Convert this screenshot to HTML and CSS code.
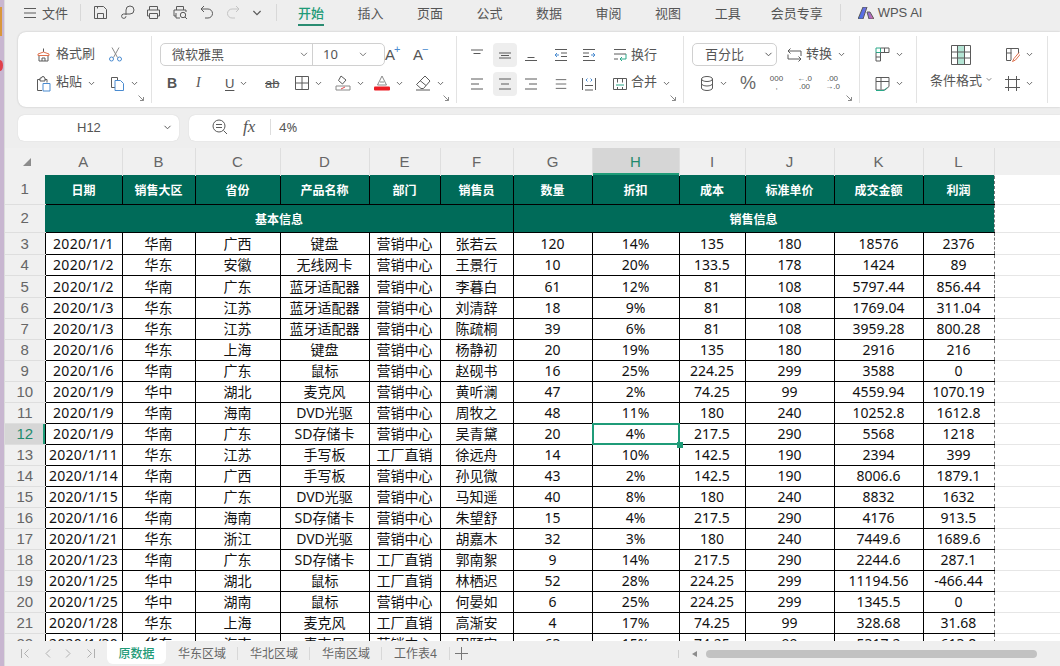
FILE: index.html
```html
<!DOCTYPE html>
<html lang="zh-CN">
<head>
  <meta charset="UTF-8">
  <title>原数据 - WPS 表格</title>
  <link rel="stylesheet" href="styles.css">
</head>
<body>
  <svg class="sprite">
    <symbol id="chev" viewBox="0 0 8 5"><path d="M1 .8l3 3 3-3"/></symbol>
    <symbol id="launch" viewBox="0 0 6 6"><path d="M.5.5l5 5M5.5 2v3.5H2"/></symbol>
    <symbol id="al-top" viewBox="0 0 16 16"><path d="M2 3h12M4.5 6.500h7"/></symbol>
    <symbol id="al-mid" viewBox="0 0 16 16"><path d="M2 6h12M4 8.500h8M2 11h12"/></symbol>
    <symbol id="al-bot" viewBox="0 0 16 16"><path d="M4.500 10.500h7M2 13.500h12"/></symbol>
    <symbol id="tx-left" viewBox="0 0 16 16"><path d="M2 3h12M2 8h8M2 13h12"/></symbol>
    <symbol id="tx-center" viewBox="0 0 16 16"><path d="M2 3h12M4 8h8M2 13h12"/></symbol>
    <symbol id="tx-right" viewBox="0 0 16 16"><path d="M2 3h12M6 8h8M2 13h12"/></symbol>
    <symbol id="tx-just" viewBox="0 0 16 16"><path d="M2 3h12M2 8h12M2 13h12"/></symbol>
  </svg>

  <div class="edge"><i class="edge-bar"></i><i class="edge-dot"></i></div>

  <div class="app">
    <!-- 顶部菜单 -->
    <header class="topbar">
      <svg class="menu-ic" width="12" height="12" viewBox="0 0 12 12"><path d="M0 1.500h12M0 6h12M0 10.500h12"/></svg>
      <span class="file">文件</span>
      <i class="vsep first"></i>
      <div class="qat">
        <svg width="15" height="15" viewBox="0 0 15 15"><path d="M1.500 1.500h9l3 3v9h-12zM4.500 13.500v-5h6v5M4.500 1.500v2"/></svg>
        <svg width="15" height="15" viewBox="0 0 15 15"><path d="M6 10V5a4 4 0 1 1 4 4H3.500a2.200 2.200 0 1 0 2.500 2.200"/></svg>
        <svg width="15" height="15" viewBox="0 0 15 15"><path d="M3.500 5V1.500h8V5M3.500 11h-2V5h12v6h-2M3.500 8.500h8v5h-8z"/></svg>
        <svg width="15" height="15" viewBox="0 0 15 15"><path d="M3.500 5V1.500h7V5M3 11H1V5h12v2M3 8v5h4"/><circle cx="10" cy="10" r="2.700"/><path d="M12 12l2 2"/></svg>
        <svg width="15" height="15" viewBox="0 0 15 15"><path d="M5 1L2 4l3 3M2 4h7a4 4 0 0 1 0 9H6"/></svg>
        <svg class="off" width="15" height="15" viewBox="0 0 15 15"><path d="M10 1l3 3-3 3M13 4H6a4 4 0 0 0 0 9h3"/></svg>
        <svg class="chev-qat" width="10" height="6"><use href="#chev"/></svg>
      </div>
      <i class="vsep second"></i>
      <nav class="tabs">
        <a class="tab on">开始</a><a class="tab">插入</a><a class="tab">页面</a><a class="tab">公式</a><a class="tab">数据</a><a class="tab">审阅</a><a class="tab">视图</a><a class="tab">工具</a><a class="tab">会员专享</a>
      </nav>
      <i class="vsep third"></i>
      <svg class="ai-logo" width="16" height="12" viewBox="0 0 16 12">
        <defs><linearGradient id="aig" x1="0" x2="1" y1="0" y2="0"><stop offset="0" stop-color="#3b6fe8"/><stop offset=".6" stop-color="#7a6ee0"/><stop offset="1" stop-color="#ee6a9a"/></linearGradient></defs>
        <path d="M5 0h4L5 12H0zM9 5h3l4 7h-5z" fill="url(#aig)"/>
      </svg>
      <span class="ai-text">WPS AI</span>
    </header>

    <!-- 功能区 -->
    <section class="ribbon">
      <div class="group g1">
        <div class="row">
          <span class="item">
            <svg width="15" height="15" viewBox="0 0 15 15"><path d="M3 8.500v5.500h9V8.500M6 14v-3h3v3M7.500 5V1.500"/><path class="or" d="M2 8.500V7l5.500-2L13 7v1.500z"/></svg>
            <span class="lb">格式刷</span>
          </span>
          <svg class="blue" width="15" height="15" viewBox="0 0 15 15"><path class="gr" d="M4 .5l5.500 10M11 .5L5.500 10.500"/><circle class="bl" cx="3.500" cy="12" r="2"/><circle class="bl" cx="11.500" cy="12" r="2"/></svg>
        </div>
        <div class="row">
          <span class="item">
            <svg width="15" height="16" viewBox="0 0 15 16"><path d="M6 14.500H1.500v-11H4M9 3.500h2v3M4 5V2h1.500a1.500 1.500 0 0 1 3 0H9v3z"/><path class="bl" d="M7 7.500h7v7.500H7z"/></svg>
            <span class="lb">粘贴</span>
            <svg class="chev" width="7" height="5"><use href="#chev"/></svg>
          </span>
          <span class="item">
            <svg width="15" height="15" viewBox="0 0 15 15"><path d="M5 11.500H1.500v-10h6V4"/><path class="bl" d="M5 4.500h5.500l3 3v7H5z"/></svg>
            <svg class="chev gap" width="7" height="5"><use href="#chev"/></svg>
          </span>
        </div>
        <svg class="launcher" width="6" height="6"><use href="#launch"/></svg>
      </div>

      <div class="group g2">
        <div class="row">
          <div class="combo font-box">
            <span class="face">微软雅黑</span>
            <svg class="chev" width="8" height="5"><use href="#chev"/></svg>
            <i class="combo-sep"></i>
            <span class="fsize">10</span>
            <svg class="chev" width="8" height="5"><use href="#chev"/></svg>
          </div>
          <span class="font-step">A<b>+</b></span>
          <span class="font-step">A<b>−</b></span>
        </div>
        <div class="row">
          <span class="t-b">B</span>
          <span class="t-i">I</span>
          <span class="item"><span class="t-u">U</span><svg class="chev gap" width="7" height="5"><use href="#chev"/></svg></span>
          <span class="t-s">ab</span>
          <span class="item">
            <svg width="14" height="14" viewBox="0 0 14 14"><path d="M.5.500h13v13H.5zM7 .5v13M.5 7h13"/></svg>
            <svg class="chev gap" width="7" height="5"><use href="#chev"/></svg>
          </span>
          <span class="item">
            <svg width="16" height="16" viewBox="0 0 16 16"><path d="M6 1l5 4-3.500 4-4-3.500z"/><path class="gr" d="M1 11h14v4H1z"/><path class="rd" d="M6 14l4-2"/></svg>
            <svg class="chev gap" width="7" height="5"><use href="#chev"/></svg>
          </span>
          <span class="item">
            <svg width="16" height="16" viewBox="0 0 16 16"><path class="gr" d="M8 1L3.500 10h9zM6 7h4"/><rect class="fill-red" x="0" y="11.500" width="16" height="4" rx="1"/></svg>
            <svg class="chev gap" width="7" height="5"><use href="#chev"/></svg>
          </span>
          <span class="item">
            <svg width="16" height="16" viewBox="0 0 16 16"><path d="M10 1l5 5-6.500 7.500H6L1.500 9.500zM5 5.500l6 5M1 15h14"/></svg>
            <svg class="chev gap" width="7" height="5"><use href="#chev"/></svg>
          </span>
        </div>
        <svg class="launcher" width="6" height="6"><use href="#launch"/></svg>
      </div>

      <div class="group g3">
        <div class="row">
          <span class="cell-ic"><svg width="16" height="16"><use href="#al-top"/></svg></span>
          <span class="cell-ic hot"><svg width="16" height="16"><use href="#al-mid"/></svg></span>
          <span class="cell-ic"><svg width="16" height="16"><use href="#al-bot"/></svg></span>
          <svg width="14" height="14" viewBox="0 0 14 14"><path d="M1 1.500h12M7 5h6M7 8.500h6M1 12.500h12"/><path class="bl" d="M5 7H1M3 5L1 7l2 2"/></svg>
          <svg width="14" height="14" viewBox="0 0 14 14"><path d="M1 1.500h12M1 5h6M1 8.500h6M1 12.500h12"/><path class="bl" d="M9 7h4M11 5l2 2-2 2"/></svg>
          <span class="item">
            <svg width="14" height="14" viewBox="0 0 14 14"><path d="M1 1.500h12M1 6h12M1 11h4"/><path class="tl" d="M13 6v5H7M9 9l-2 2 2 2"/></svg>
            <span class="lb">换行</span>
          </span>
        </div>
        <div class="row">
          <span class="cell-ic"><svg width="16" height="16"><use href="#tx-left"/></svg></span>
          <span class="cell-ic hot"><svg width="16" height="16"><use href="#tx-center"/></svg></span>
          <span class="cell-ic"><svg width="16" height="16"><use href="#tx-right"/></svg></span>
          <svg width="14" height="14"><use href="#tx-just"/></svg>
          <svg width="14" height="14" viewBox="0 0 14 14"><path d="M.5 1v12M13.500 1v12M3 13h8M3 8.500h8"/><path class="bl" d="M5.500 1.500L4 3l1.500 1.500M8.500 1.500L10 3 8.500 4.500"/></svg>
          <span class="item">
            <svg width="14" height="14" viewBox="0 0 14 14"><path d="M.5 1.500h13v11H.5zM4.500 1.500v4M9.500 1.500v4M4.500 10v2.500M9.500 10v2.500"/><path class="tl" d="M3 8h8"/></svg>
            <span class="lb">合并</span>
            <svg class="chev" width="7" height="5"><use href="#chev"/></svg>
          </span>
        </div>
        <svg class="launcher" width="6" height="6"><use href="#launch"/></svg>
      </div>

      <div class="group g4">
        <div class="row">
          <div class="combo num-box">
            <span class="face">百分比</span>
            <svg class="chev" width="9" height="5"><use href="#chev"/></svg>
          </div>
          <span class="item">
            <svg width="15" height="14" viewBox="0 0 15 14"><path d="M3.500 .5L1 3l2.500 2.500M1 3h13v5M1 6.500V11h13M11.500 8.500L14 11l-2.500 2.500"/></svg>
            <span class="lb">转换</span>
            <svg class="chev" width="7" height="5"><use href="#chev"/></svg>
          </span>
        </div>
        <div class="row">
          <span class="item">
            <svg width="14" height="15" viewBox="0 0 14 15"><ellipse cx="7" cy="3" rx="5.500" ry="2.500"/><path d="M1.500 3v9c0 1.400 2.500 2.500 5.500 2.500s5.500-1.100 5.500-2.500V3M1.500 7.500c0 1.400 2.500 2.500 5.500 2.500s5.500-1.100 5.500-2.500"/></svg>
            <svg class="chev gap" width="7" height="5"><use href="#chev"/></svg>
          </span>
          <span class="t-pct">%</span>
          <span class="t-thou">000<br>,</span>
          <span class="t-dec">←.0<br>.00</span>
          <span class="t-dec">.00<br>→.0</span>
        </div>
        <svg class="launcher" width="6" height="6"><use href="#launch"/></svg>
      </div>

      <div class="group g5">
        <div class="row">
          <span class="item">
            <svg width="15" height="15" viewBox="0 0 15 15"><path class="tl" d="M1 1h4.500v4.500H1z"/><path d="M5.500 5.500V14H1V5.500M5.500 1H14v4.500H5.500M9.500 1v4.500M1 10h4.500"/></svg>
            <svg class="chev gap" width="7" height="5"><use href="#chev"/></svg>
          </span>
        </div>
        <div class="row">
          <span class="item">
            <svg width="15" height="15" viewBox="0 0 15 15"><path d="M1 1.500h13v9l-4 3.500H1zM1 5.500h13M6 1.500v12"/><path class="tl" d="M1 14.500h8l3-3"/></svg>
            <svg class="chev gap" width="7" height="5"><use href="#chev"/></svg>
          </span>
        </div>
      </div>

      <div class="group g6">
        <div class="big">
          <svg width="20" height="20" viewBox="0 0 20 20">
            <rect class="fill-mint" x="6" y="0" width="8" height="20"/>
            <path d="M.5.500h19v19H.5zM.5 7h19M.5 13h19M6.500.5v19M13.500.5v19"/>
          </svg>
          <span class="big-lb">条件格式<svg class="chev" width="6" height="5"><use href="#chev"/></svg></span>
        </div>
        <div class="side">
          <div class="row">
            <span class="item">
              <svg width="15" height="15" viewBox="0 0 15 15"><path d="M6 13.500H1.500v-12h12v5M1.500 6h5M6 1.500V13"/><path class="or" d="M14 5.500l-5 6-1.500 3 3-1.500 5-6"/></svg>
              <svg class="chev gap" width="7" height="5"><use href="#chev"/></svg>
            </span>
          </div>
          <div class="row">
            <span class="item">
              <svg width="15" height="15" viewBox="0 0 15 15"><path d="M3.500 0v15M11.500 0v15M0 3.500h15M0 11.500h15"/></svg>
              <svg class="chev gap" width="7" height="5"><use href="#chev"/></svg>
            </span>
          </div>
        </div>
      </div>
    </section>

    <!-- 编辑栏 -->
    <section class="formula">
      <div class="namebox">
        <span>H12</span>
        <svg class="chev" width="9" height="5"><use href="#chev"/></svg>
      </div>
      <div class="fbox">
        <svg class="zoom-ic" width="16" height="16" viewBox="0 0 16 16"><circle cx="7" cy="7" r="6"/><path d="M4 5.500h6M4 8.500h6M11.500 11.500l3.500 3.500"/></svg>
        <span class="fx">fx</span>
        <i class="fsep"></i>
        <span class="fval">4%</span>
      </div>
    </section>

    <!-- 表格 -->
    <main class="sheet">
      <table class="grid">
        <colgroup>
          <col class="w-rh"><col class="w-a"><col class="w-b"><col class="w-c"><col class="w-d"><col class="w-e"><col class="w-f"><col class="w-g"><col class="w-h"><col class="w-i"><col class="w-j"><col class="w-k"><col class="w-l"><col class="w-m">
        </colgroup>
        <thead>
          <tr class="letters">
            <th class="corner"><svg width="8" height="8" viewBox="0 0 8 8"><path class="fill-gr" d="M8 0v8H0z"/></svg></th>
            <th>A</th><th>B</th><th>C</th><th>D</th><th>E</th><th>F</th><th>G</th><th class="cur">H</th><th>I</th><th>J</th><th>K</th><th>L</th><th class="rest"></th>
          </tr>
        </thead>
        <tbody>
          <tr class="title"><th>1</th><td>日期</td><td>销售大区</td><td>省份</td><td>产品名称</td><td>部门</td><td>销售员</td><td>数量</td><td>折扣</td><td>成本</td><td>标准单价</td><td>成交金额</td><td class="last">利润</td><td class="rest"></td></tr>
          <tr class="title two"><th>2</th><td colspan="6">基本信息</td><td colspan="6" class="last">销售信息</td><td class="rest"></td></tr>
          <tr class="tall"><th>3</th><td>2020/1/1</td><td>华南</td><td>广西</td><td>键盘</td><td>营销中心</td><td>张若云</td><td>120</td><td>14%</td><td>135</td><td>180</td><td>18576</td><td class="last">2376</td><td class="rest"></td></tr>
          <tr><th>4</th><td>2020/1/2</td><td>华东</td><td>安徽</td><td>无线网卡</td><td>营销中心</td><td>王景行</td><td>10</td><td>20%</td><td>133.5</td><td>178</td><td>1424</td><td class="last">89</td><td class="rest"></td></tr>
          <tr class="tall"><th>5</th><td>2020/1/2</td><td>华南</td><td>广东</td><td>蓝牙适配器</td><td>营销中心</td><td>李暮白</td><td>61</td><td>12%</td><td>81</td><td>108</td><td>5797.44</td><td class="last">856.44</td><td class="rest"></td></tr>
          <tr><th>6</th><td>2020/1/3</td><td>华东</td><td>江苏</td><td>蓝牙适配器</td><td>营销中心</td><td>刘清辞</td><td>18</td><td>9%</td><td>81</td><td>108</td><td>1769.04</td><td class="last">311.04</td><td class="rest"></td></tr>
          <tr><th>7</th><td>2020/1/3</td><td>华东</td><td>江苏</td><td>蓝牙适配器</td><td>营销中心</td><td>陈疏桐</td><td>39</td><td>6%</td><td>81</td><td>108</td><td>3959.28</td><td class="last">800.28</td><td class="rest"></td></tr>
          <tr><th>8</th><td>2020/1/6</td><td>华东</td><td>上海</td><td>键盘</td><td>营销中心</td><td>杨静初</td><td>20</td><td>19%</td><td>135</td><td>180</td><td>2916</td><td class="last">216</td><td class="rest"></td></tr>
          <tr><th>9</th><td>2020/1/6</td><td>华南</td><td>广东</td><td>鼠标</td><td>营销中心</td><td>赵砚书</td><td>16</td><td>25%</td><td>224.25</td><td>299</td><td>3588</td><td class="last">0</td><td class="rest"></td></tr>
          <tr><th>10</th><td>2020/1/9</td><td>华中</td><td>湖北</td><td>麦克风</td><td>营销中心</td><td>黄听澜</td><td>47</td><td>2%</td><td>74.25</td><td>99</td><td>4559.94</td><td class="last">1070.19</td><td class="rest"></td></tr>
          <tr><th>11</th><td>2020/1/9</td><td>华南</td><td>海南</td><td>DVD光驱</td><td>营销中心</td><td>周牧之</td><td>48</td><td>11%</td><td>180</td><td>240</td><td>10252.8</td><td class="last">1612.8</td><td class="rest"></td></tr>
          <tr><th class="cur">12</th><td>2020/1/9</td><td>华南</td><td>广东</td><td>SD存储卡</td><td>营销中心</td><td>吴青黛</td><td>20</td><td class="sel">4%</td><td>217.5</td><td>290</td><td>5568</td><td class="last">1218</td><td class="rest"></td></tr>
          <tr><th>13</th><td>2020/1/11</td><td>华东</td><td>江苏</td><td>手写板</td><td>工厂直销</td><td>徐远舟</td><td>14</td><td>10%</td><td>142.5</td><td>190</td><td>2394</td><td class="last">399</td><td class="rest"></td></tr>
          <tr><th>14</th><td>2020/1/14</td><td>华南</td><td>广西</td><td>手写板</td><td>营销中心</td><td>孙见微</td><td>43</td><td>2%</td><td>142.5</td><td>190</td><td>8006.6</td><td class="last">1879.1</td><td class="rest"></td></tr>
          <tr><th>15</th><td>2020/1/15</td><td>华南</td><td>广东</td><td>DVD光驱</td><td>营销中心</td><td>马知遥</td><td>40</td><td>8%</td><td>180</td><td>240</td><td>8832</td><td class="last">1632</td><td class="rest"></td></tr>
          <tr><th>16</th><td>2020/1/16</td><td>华南</td><td>海南</td><td>SD存储卡</td><td>营销中心</td><td>朱望舒</td><td>15</td><td>4%</td><td>217.5</td><td>290</td><td>4176</td><td class="last">913.5</td><td class="rest"></td></tr>
          <tr><th>17</th><td>2020/1/21</td><td>华东</td><td>浙江</td><td>DVD光驱</td><td>营销中心</td><td>胡嘉木</td><td>32</td><td>3%</td><td>180</td><td>240</td><td>7449.6</td><td class="last">1689.6</td><td class="rest"></td></tr>
          <tr><th>18</th><td>2020/1/23</td><td>华南</td><td>广东</td><td>SD存储卡</td><td>工厂直销</td><td>郭南絮</td><td>9</td><td>14%</td><td>217.5</td><td>290</td><td>2244.6</td><td class="last">287.1</td><td class="rest"></td></tr>
          <tr><th>19</th><td>2020/1/25</td><td>华中</td><td>湖北</td><td>鼠标</td><td>工厂直销</td><td>林栖迟</td><td>52</td><td>28%</td><td>224.25</td><td>299</td><td>11194.56</td><td class="last">-466.44</td><td class="rest"></td></tr>
          <tr><th>20</th><td>2020/1/25</td><td>华中</td><td>湖南</td><td>鼠标</td><td>营销中心</td><td>何晏如</td><td>6</td><td>25%</td><td>224.25</td><td>299</td><td>1345.5</td><td class="last">0</td><td class="rest"></td></tr>
          <tr><th>21</th><td>2020/1/28</td><td>华东</td><td>上海</td><td>麦克风</td><td>工厂直销</td><td>高渐安</td><td>4</td><td>17%</td><td>74.25</td><td>99</td><td>328.68</td><td class="last">31.68</td><td class="rest"></td></tr>
          <tr><th>22</th><td>2020/1/30</td><td>华东</td><td>海南</td><td>麦克风</td><td>营销中心</td><td>田颐安</td><td>63</td><td>15%</td><td>74.25</td><td>99</td><td>5317.2</td><td class="last">613.8</td><td class="rest"></td></tr>
        </tbody>
      </table>
    </main>

    <!-- 工作表标签 -->
    <footer class="sheetbar">
      <div class="nav">
        <svg width="9" height="9" viewBox="0 0 9 9"><path d="M.5 0v9M7.500.5l-4 4 4 4"/></svg>
        <svg width="7" height="9" viewBox="0 0 7 9"><path d="M6 .5l-4 4 4 4"/></svg>
        <svg width="7" height="9" viewBox="0 0 7 9"><path d="M1 .5l4 4-4 4"/></svg>
        <svg width="9" height="9" viewBox="0 0 9 9"><path d="M8.500 0v9M1.500.5l4 4-4 4"/></svg>
      </div>
      <a class="stab on">原数据</a><a class="stab">华东区域</a><a class="stab">华北区域</a><a class="stab">华南区域</a><a class="stab short">工作表4</a>
      <svg class="plus" width="13" height="13" viewBox="0 0 13 13"><path d="M6.500 0v13M0 6.500h13"/></svg>
      <i class="bar-sep"></i>
      <svg class="arrow-left" width="5" height="6" viewBox="0 0 5 6"><path class="fill-gr" d="M5 0v6L0 3z"/></svg>
      <div class="thumb"></div>
    </footer>
  </div>
</body>
</html>
```

FILE: styles.css
```css
html, body {
  margin: 0;
  height: 100%;
}
body {
  width: 1060px;
  height: 666px;
  display: flex;
  overflow: hidden;
  background: #eeeeee;
  color: #555;
  font-family: "Noto Sans", "Noto Sans CJK SC", sans-serif;
  font-size: 13px;
}
svg {
  fill: none;
  stroke: #5a5a5a;
  stroke-width: 1;
  flex: none;
  display: block;
}
.sprite { display: none; }
.bl { stroke: #4a8bd0; }
.gr { stroke: #8a8a8a; }
.rd { stroke: #e5484d; }
.tl { stroke: #2aa888; }
.or { stroke: #e0734f; }
.fill-red { fill: #ec1c24; stroke: none; }
.fill-mint { fill: #b4e4d4; stroke: none; }
.fill-gr { fill: #8c8c8c; stroke: none; }

/* 左侧露出的桌面 */
.edge {
  position: relative;
  width: 5px;
  flex: none;
  background: #c8b6d0;
  border-right: 1px solid #dcdcdc;
  box-sizing: border-box;
}
.edge-bar {
  position: absolute;
  top: 7px;
  left: 0;
  width: 2px;
  height: 29px;
  background: #d9973b;
}
.edge-dot {
  position: absolute;
  top: 60px;
  left: -3px;
  width: 6px;
  height: 11px;
  border-radius: 50%;
  background: #e0404a;
}

.app {
  flex: 1;
  min-width: 0;
  display: flex;
  flex-direction: column;
}

/* 顶部菜单 */
.topbar {
  height: 32px;
  flex: none;
  display: flex;
  align-items: center;
  padding: 0 0 7px 19px;
  box-sizing: border-box;
}
.file { margin-left: 6px; }
.vsep {
  width: 1px;
  height: 17px;
  background: #d8d8d8;
  flex: none;
}
.vsep.first { margin: 0 12px; }
.vsep.second { margin: 0 21px 0 14px; }
.vsep.third { margin: 0 17px; }
.qat {
  display: flex;
  align-items: center;
  gap: 11.5px;
}
.qat .off { stroke: #c4c4c4; }
.tabs {
  display: flex;
  gap: 33.5px;
}
.tab {
  position: relative;
  line-height: 24px;
  white-space: nowrap;
}
.tab:last-child { margin-left: -3.5px; }
.tab.on {
  color: #1f9b78;
  font-weight: 500;
}
.tab.on::after {
  content: "";
  position: absolute;
  left: 0;
  right: 0;
  bottom: -1px;
  height: 2px;
  background: #2a8c72;
}
.ai-text {
  margin-left: 4px;
  font-family: "Liberation Sans", sans-serif;
  font-size: 13px;
}

/* 功能区 */
.ribbon {
  height: 75px;
  flex: none;
  margin-left: 13px;
  padding-top: 4px;
  box-sizing: border-box;
  display: flex;
  background: #fff;
  border-radius: 8px 0 0 8px;
  box-shadow: 0 0 2px rgba(0, 0, 0, .22);
}
.group {
  position: relative;
  height: 67px;
  padding-top: 7px;
  box-sizing: border-box;
  border-right: 1px solid #e3e3e3;
  flex: none;
}
.row {
  display: grid;
  align-items: center;
  height: 23px;
}
.row + .row {
  margin-top: 5px;
  height: 24px;
}
.item {
  display: flex;
  align-items: center;
  white-space: nowrap;
}
.lb {
  margin: 0 0 4px 5px;
}
.row + .row .lb { margin-bottom: 6px; }
.chev {
  margin-left: 6px;
  stroke-width: 1;
}
.launcher {
  position: absolute;
  right: 7px;
  bottom: 2px;
  stroke: #8a8a8a;
}
.combo {
  display: flex;
  align-items: center;
  height: 23px;
  box-sizing: border-box;
  border: 1px solid #d0d0d0;
  border-radius: 5px;
}
.combo .chev { margin-left: 0; }
.face, .fsize { margin-bottom: 2px; }

.g1 { width: 134px; padding-left: 18px; }
.g1 .row { grid-template-columns: 72px auto; }
.g1 .row + .row { grid-template-columns: 74px auto; }
.g1 .chev.gap { margin-left: 6px; }

.g2 { width: 305px; padding-left: 8px; }
.g2 .row { grid-template-columns: 225px 28px auto; }
.g2 .row + .row {
  padding-left: 7px;
  grid-template-columns: 29px 29px 40px 30px 40px 39px 41px auto;
}
.font-box { padding-left: 11px; }
.font-box .face { width: 128px; }
.font-box > .chev { stroke: #777; }
.combo-sep {
  width: 1px;
  height: 21px;
  margin: 0 10px 0 4px;
  background: #d0d0d0;
}
.fsize { width: 36px; }
.font-step {
  font-family: "Liberation Sans", sans-serif;
  font-size: 15px;
  position: relative;
  width: 14px;
  line-height: 23px;
}
.font-step b {
  position: absolute;
  left: 9px;
  top: -5px;
  color: #4a8bd0;
  font-size: 11px;
  font-weight: 400;
}
.t-b, .t-i, .t-u, .t-s {
  font-family: "Liberation Sans", sans-serif;
  font-size: 13px;
}
.t-b { font-weight: 700; font-size: 14px; }
.t-i { font-style: italic; font-family: "Liberation Serif", serif; font-size: 14px; }
.t-u { text-decoration: underline; text-underline-offset: 2px; }
.t-s { text-decoration: line-through; }

.g3 { width: 227px; padding-left: 13px; }
.g3 .row { grid-template-columns: 23px 31px 30px 28px 31px auto; }
.g3 .lb { margin-left: 4px; }
.cell-ic {
  width: 24px;
  height: 24px;
  margin-left: -5px;
  display: flex;
  align-items: center;
  justify-content: center;
  border-radius: 4px;
}
.cell-ic.hot {
  margin-left: 0;
  background: #eeeeee;
}

.g4 { width: 176px; padding-left: 8px; }
.g4 .row { grid-template-columns: 95px auto; }
.g4 .lb { margin-left: 4px; }
.g4 .row + .row {
  padding-left: 8px;
  grid-template-columns: 40px 29px 28px 28px auto;
}
.num-box {
  width: 85px;
  padding-left: 12px;
}
.num-box .face { width: 59px; }
.t-pct {
  font-family: "Liberation Sans", sans-serif;
  font-size: 18px;
  color: #666;
}
.t-thou, .t-dec {
  font-family: "Liberation Sans", sans-serif;
  font-size: 8px;
  line-height: 8px;
  text-align: center;
  width: 15px;
}

.g5 { width: 57px; padding-left: 15px; }
.g5 .row { grid-template-columns: auto; }

.g6 {
  width: 131px;
  display: flex;
  padding-left: 13px;
}
.big {
  width: 75px;
  display: flex;
  flex-direction: column;
  align-items: flex-start;
}
.big > svg {
  margin: 2px 0 0 21px;
}
.big-lb {
  display: flex;
  align-items: center;
  margin-top: 5px;
  white-space: nowrap;
}
.big-lb .chev { margin-left: 4px; }
.side .row { grid-template-columns: auto; }

/* 编辑栏 */
.formula {
  height: 26px;
  flex: none;
  margin: 8px 0 7px 13px;
  display: flex;
  gap: 10px;
}
.namebox {
  width: 161px;
  flex: none;
  display: flex;
  align-items: center;
  padding: 0 7px 2px 59px;
  box-sizing: border-box;
  justify-content: space-between;
  background: #fff;
  border-radius: 6px;
  font-family: "Liberation Sans", sans-serif;
  box-shadow: 0 0 1px rgba(0, 0, 0, .2);
}
.fbox {
  flex: 1;
  display: flex;
  align-items: center;
  padding: 0 0 2px 23px;
  background: #fff;
  border-radius: 6px 0 0 6px;
  box-shadow: 0 0 1px rgba(0, 0, 0, .2);
}
.fx {
  margin-left: 15px;
  width: 16px;
  font-family: "Liberation Serif", serif;
  font-style: italic;
  font-size: 17px;
}
.fsep {
  width: 1px;
  height: 16px;
  margin: 0 8px 0 11px;
  background: #ddd;
}
.fval { font-size: 13px; }

/* 表格 */
.sheet {
  flex: 1;
  min-height: 0;
  overflow: hidden;
  background: #fff;
}
.grid {
  width: 1055px;
  table-layout: fixed;
  border-collapse: collapse;
  color: #111;
  font-size: 14px;
}
.w-rh { width: 40px; }
.w-a { width: 77px; }
.w-b { width: 73px; }
.w-c { width: 85px; }
.w-d { width: 89px; }
.w-e { width: 71px; }
.w-f { width: 73px; }
.w-g { width: 79px; }
.w-h { width: 87px; }
.w-i { width: 66px; }
.w-j { width: 89px; }
.w-k { width: 89px; }
.w-l { width: 71px; }
.w-m { width: 66px; }

.grid th, .grid td {
  padding: 0;
  height: 21px;
  box-sizing: border-box;
  text-align: center;
  white-space: nowrap;
  overflow: hidden;
  line-height: 19px;
}
.grid td {
  border: 1px solid #000;
}
.grid td:nth-child(2) { letter-spacing: .3px; }
.grid tbody th {
  background: #f0f0f0;
  border-bottom: 1px solid #dedede;
  color: #666;
  font-family: "Liberation Sans", sans-serif;
  font-size: 15px;
  font-weight: 400;
}
.grid .tall th, .grid .tall td { height: 22px; }
.grid td.last { border-right: 1px dashed #777; }
.grid td.rest {
  border: 0;
  border-bottom: 1px solid #e6e6e6;
}

.letters th {
  height: 27px;
  background: #f0f0f0;
  border-right: 1px solid #dedede;
  color: #666;
  font-family: "Liberation Sans", sans-serif;
  font-size: 15px;
  font-weight: 400;
}
.letters th.corner { border-right: 0; }
.corner svg { margin: 0 0 0 18px; }
.letters th.cur {
  background: #d6d6d6;
  color: #1f8a6c;
  box-shadow: inset 0 -2px 0 #1f9b78;
}
.letters th.rest { border-right: 0; }
.grid tbody th.cur {
  background: #d6d6d6;
  color: #1f8a6c;
  box-shadow: inset -2px 0 0 #1f9b78;
}

.grid .title td {
  height: 29px;
  padding-top: 2px;
  background: #006b59;
  color: #fff;
  font-size: 12px;
  font-weight: 700;
  letter-spacing: 0;
}
.grid .title th {
  height: 29px;
  padding-bottom: 2px;
}
.grid .title.two td, .grid .title.two th { height: 28px; }
.grid .title td:first-of-type { border-left-color: #006b59; }
.grid .title:first-child td { border-top-color: #006b59; }
.grid .title td.rest {
  background: #fff;
  border-bottom-color: #e6e6e6;
}

/* 当前单元格 */
.grid td.sel {
  position: relative;
  overflow: visible;
}
.sel::before {
  content: "";
  position: absolute;
  inset: -1px;
  border: 2px solid #1f9b78;
}
.sel::after {
  content: "";
  position: absolute;
  right: -4px;
  bottom: -4px;
  width: 6px;
  height: 6px;
  background: #1f9b78;
}

/* 工作表标签 */
.sheetbar {
  height: 25px;
  flex: none;
  display: flex;
  align-items: center;
  background: #efefef;
  font-size: 12px;
}
.nav {
  display: flex;
  align-items: center;
  gap: 14px;
  width: 102px;
  padding-left: 16px;
  box-sizing: border-box;
}
.nav svg { stroke: #b0b0b0; }
.stab {
  width: 72px;
  line-height: 12px;
  padding: 1px 0 0 1px;
  text-align: center;
  border-right: 1px solid #d8d8d8;
  box-sizing: border-box;
  color: #666;
}
.stab.short { width: 68px; padding-left: 0; }
.stab.on {
  width: 59px;
  height: 23px;
  line-height: 25px;
  padding: 0;
  margin: 0 0 2px;
  border: 0;
  border-radius: 0 0 6px 6px;
  background: #fff;
  color: #1f9b78;
  font-weight: 500;
}
.plus {
  margin-left: 5px;
  stroke: #777;
}
.bar-sep {
  width: 1px;
  height: 8px;
  margin-left: 210px;
  background: #cfcfcf;
}
.arrow-left { margin-left: 13px; }
.thumb {
  width: 331px;
  height: 8px;
  margin-left: 9px;
  border-radius: 4px;
  background: #c2c2c2;
}
```
